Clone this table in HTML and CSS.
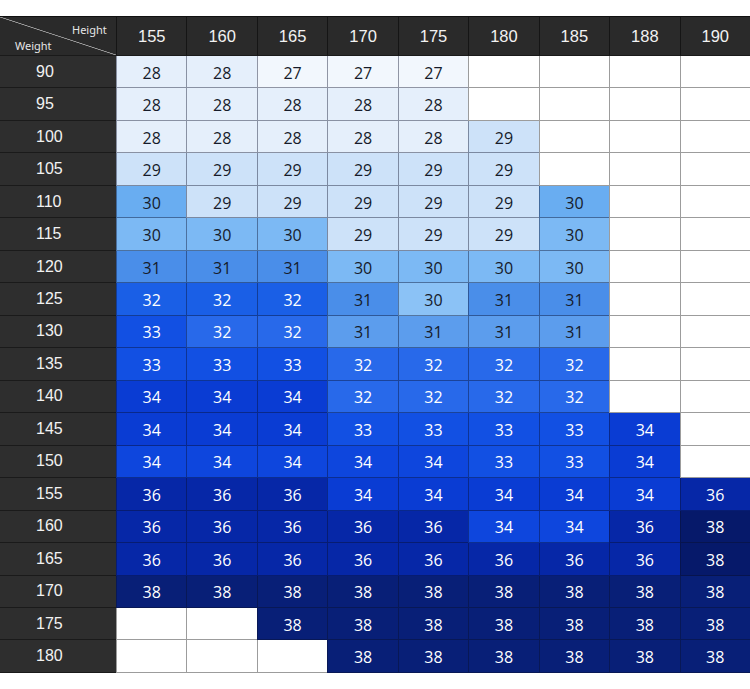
FILE: index.html
```html
<!DOCTYPE html>
<html>
<head>
<meta charset="utf-8">
<link rel="stylesheet" href="styles.css">
</head>
<body>
<div class="chart">
  <div class="corner"><span class="h">Height</span><span class="w">Weight</span></div>
  <div class="hd">155</div><div class="hd">160</div><div class="hd">165</div><div class="hd">170</div><div class="hd">175</div><div class="hd">180</div><div class="hd">185</div><div class="hd">188</div><div class="hd">190</div>

  <div class="wt">90</div><div class="c c28">28</div><div class="c c28">28</div><div class="c c27">27</div><div class="c c27">27</div><div class="c c27">27</div><div class="c e"></div><div class="c e"></div><div class="c e"></div><div class="c e"></div>
  <div class="wt">95</div><div class="c c28">28</div><div class="c c28">28</div><div class="c c28">28</div><div class="c c28">28</div><div class="c c28">28</div><div class="c e"></div><div class="c e"></div><div class="c e"></div><div class="c e"></div>
  <div class="wt">100</div><div class="c c28">28</div><div class="c c28">28</div><div class="c c28">28</div><div class="c c28">28</div><div class="c c28">28</div><div class="c c29">29</div><div class="c e"></div><div class="c e"></div><div class="c e"></div>
  <div class="wt">105</div><div class="c c29">29</div><div class="c c29">29</div><div class="c c29">29</div><div class="c c29">29</div><div class="c c29">29</div><div class="c c29">29</div><div class="c e"></div><div class="c e"></div><div class="c e"></div>
  <div class="wt">110</div><div class="c c30 deep">30</div><div class="c c29">29</div><div class="c c29">29</div><div class="c c29">29</div><div class="c c29">29</div><div class="c c29">29</div><div class="c c30 deep">30</div><div class="c e"></div><div class="c e"></div>
  <div class="wt">115</div><div class="c c30">30</div><div class="c c30">30</div><div class="c c30">30</div><div class="c c29">29</div><div class="c c29">29</div><div class="c c29">29</div><div class="c c30">30</div><div class="c e"></div><div class="c e"></div>
  <div class="wt">120</div><div class="c c31">31</div><div class="c c31">31</div><div class="c c31">31</div><div class="c c30">30</div><div class="c c30">30</div><div class="c c30">30</div><div class="c c30">30</div><div class="c e"></div><div class="c e"></div>
  <div class="wt">125</div><div class="c c32">32</div><div class="c c32">32</div><div class="c c32">32</div><div class="c c31">31</div><div class="c c30 pale">30</div><div class="c c31">31</div><div class="c c31">31</div><div class="c e"></div><div class="c e"></div>
  <div class="wt">130</div><div class="c c33">33</div><div class="c c32 pale">32</div><div class="c c32 pale">32</div><div class="c c31 pale">31</div><div class="c c31 pale">31</div><div class="c c31 pale">31</div><div class="c c31 pale">31</div><div class="c e"></div><div class="c e"></div>
  <div class="wt">135</div><div class="c c33">33</div><div class="c c33">33</div><div class="c c33">33</div><div class="c c32 pale">32</div><div class="c c32 pale">32</div><div class="c c32 pale">32</div><div class="c c32 pale">32</div><div class="c e"></div><div class="c e"></div>
  <div class="wt">140</div><div class="c c34">34</div><div class="c c34">34</div><div class="c c34">34</div><div class="c c32 pale">32</div><div class="c c32 pale">32</div><div class="c c32 pale">32</div><div class="c c32 pale">32</div><div class="c e"></div><div class="c e"></div>
  <div class="wt">145</div><div class="c c34">34</div><div class="c c34">34</div><div class="c c34">34</div><div class="c c33">33</div><div class="c c33">33</div><div class="c c33">33</div><div class="c c33">33</div><div class="c c34">34</div><div class="c e"></div>
  <div class="wt">150</div><div class="c c34 pale">34</div><div class="c c34 pale">34</div><div class="c c34 pale">34</div><div class="c c34 pale">34</div><div class="c c34 pale">34</div><div class="c c33">33</div><div class="c c33">33</div><div class="c c34">34</div><div class="c e"></div>
  <div class="wt">155</div><div class="c c36">36</div><div class="c c36">36</div><div class="c c36">36</div><div class="c c34">34</div><div class="c c34">34</div><div class="c c34">34</div><div class="c c34">34</div><div class="c c34">34</div><div class="c c36">36</div>
  <div class="wt">160</div><div class="c c36">36</div><div class="c c36">36</div><div class="c c36">36</div><div class="c c36">36</div><div class="c c36">36</div><div class="c c34 pale">34</div><div class="c c34 pale">34</div><div class="c c36">36</div><div class="c c38 deep">38</div>
  <div class="wt">165</div><div class="c c36">36</div><div class="c c36">36</div><div class="c c36">36</div><div class="c c36">36</div><div class="c c36">36</div><div class="c c36">36</div><div class="c c36">36</div><div class="c c36">36</div><div class="c c38 deep">38</div>
  <div class="wt">170</div><div class="c c38">38</div><div class="c c38">38</div><div class="c c38">38</div><div class="c c38">38</div><div class="c c38">38</div><div class="c c38">38</div><div class="c c38">38</div><div class="c c38">38</div><div class="c c38">38</div>
  <div class="wt">175</div><div class="c e"></div><div class="c e"></div><div class="c c38">38</div><div class="c c38">38</div><div class="c c38">38</div><div class="c c38">38</div><div class="c c38">38</div><div class="c c38">38</div><div class="c c38">38</div>
  <div class="wt">180</div><div class="c e"></div><div class="c e"></div><div class="c e"></div><div class="c c38">38</div><div class="c c38">38</div><div class="c c38">38</div><div class="c c38">38</div><div class="c c38">38</div><div class="c c38">38</div>
</div>
</body>
</html>
```

FILE: styles.css
```css
html, body {
  margin: 0;
  padding: 0;
  background: #ffffff;
}

.chart {
  margin-top: 16px;
  width: 750px;
  display: grid;
  grid-template-columns: 116px repeat(9, 1fr);
  grid-template-rows: 40px repeat(19, 32.47px);
  font-family: "Liberation Sans", Arial, sans-serif;
}

.corner {
  position: relative;
  background-color: #2a2a2a;
  background-image: linear-gradient(to top right, transparent calc(50% - 0.7px), #9a9a9a calc(50% - 0.2px), #9a9a9a calc(50% + 0.2px), transparent calc(50% + 0.7px));
  border-top: 1px solid #111;
  border-bottom: 1px solid #1a1a1a;
  color: #e6e6e6;
  font-family: "Noto Sans", "Liberation Sans", sans-serif;
  font-size: 11px;
}

.corner .h {
  position: absolute;
  left: 72px;
  top: 5px;
}

.corner .w {
  position: absolute;
  left: 15px;
  top: 21px;
}

.hd {
  background: #2a2a2a;
  color: #f2f2f2;
  border-top: 1px solid #111;
  border-left: 1px solid #151515;
  border-bottom: 1px solid #1a1a1a;
  font-size: 16.5px;
  display: flex;
  align-items: center;
  justify-content: center;
  padding-top: 1px;
}

.wt {
  background: #2e2e2e;
  color: #f2f2f2;
  border-bottom: 1px solid #1a1a1a;
  font-size: 16px;
  display: flex;
  align-items: center;
  padding-left: 36px;
}

.c {
  display: flex;
  align-items: center;
  justify-content: center;
  border-left: 1px solid rgba(10, 15, 40, 0.42);
  border-bottom: 1px solid rgba(10, 15, 40, 0.42);
  font-size: 16px;
  font-family: "Open Sans", "Liberation Sans", sans-serif;
  padding-top: 2px;
  color: #161b2a;
}

.e { background: #ffffff; border-left-color: #9c9c9c; border-bottom-color: #9c9c9c; }
.c27 { background: #f2f7fd; }
.c28 { background: #e5effb; }
.c29 { background: #cde2f9; }
.c30 { background: #7cb9f4; }
.c30.deep { background: #69adf1; }
.c30.pale { background: #8bc2f6; }
.c31 { background: #4a8ee9; }
.c31.pale { background: #5c9ded; }
.c32 { background: #1a5fe6; color: #fff; }
.c32.pale { background: #2869ea; }
.c33 { background: #1250e3; color: #fff; }
.c34 { background: #0a3cd3; color: #fff; }
.c34.pale { background: #0e46dd; }
.c36 { background: #0627a7; color: #fff; }
.c38 { background: #081f77; color: #fff; }
.c38.deep { background: #06196a; }
```
